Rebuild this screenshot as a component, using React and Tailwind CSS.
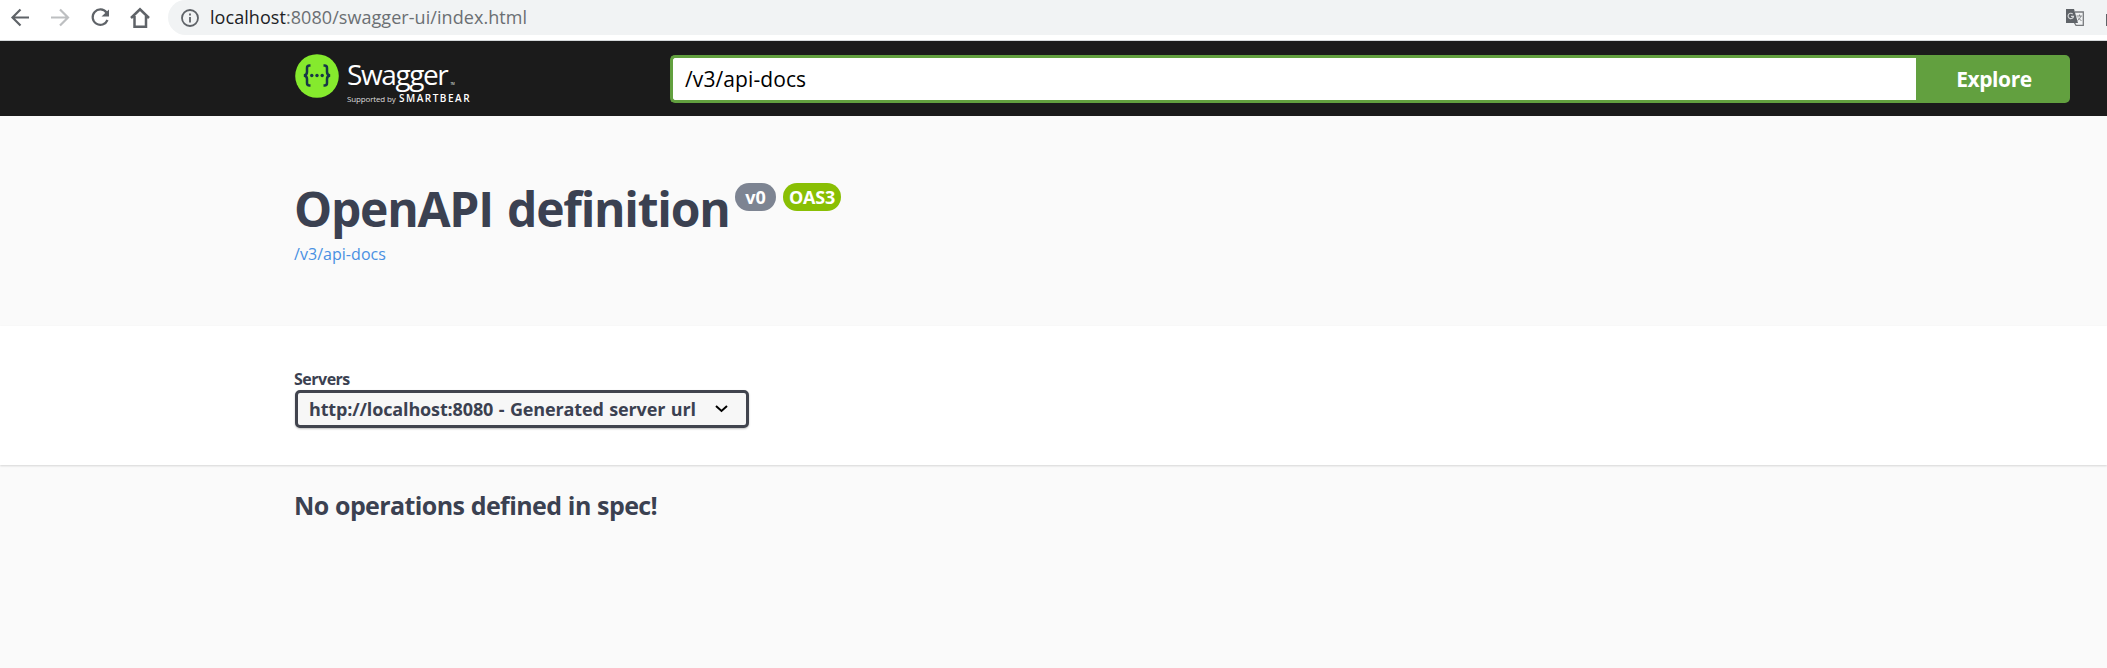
function BrowserBar() {
  return (
    <div className="flex h-[41px] items-start border-b border-[#d5d8da] bg-white">
      <svg className="h-[37px] w-[168px] shrink-0" viewBox="0 0 168 37" fill="none" strokeWidth="2.2">
        <path d="M29 17.500H13M20.500 9.500L12.500 17.500L20.500 25.500" stroke="#5f6368" />
        <path d="M51 17.500H67M60 9.500L68 17.500L60 25.500" stroke="#bdbfc1" />
        <path d="M106.500 12.500A7.700 7.700 0 1 0 107.500 20" stroke="#5f6368" />
        <path d="M109 9.500V16.500H101.500Z" fill="#5f6368" />
        <path d="M131 18L140 9.300L149 18M134.500 16V26.700H146V16" stroke="#5f6368" strokeWidth="2.500" />
      </svg>
      <div className="flex h-[35px] grow items-center rounded-l-[18px] bg-[#f1f3f4] pl-[13px]">
        <svg className="size-[18px]" viewBox="0 0 18 18" fill="none" stroke="#5f6368" strokeWidth="1.8">
          <circle cx="9" cy="9" r="8" />
          <path d="M9 8V13.500M9 4.500V6.400" />
        </svg>
        <span className="ml-[11px] grow pb-px text-[18px] leading-6 tracking-[0.06px] text-[#6b6f73]">
          <span className="text-[#202124]">localhost</span>:8080/swagger-ui/index.html
        </span>
        <svg className="mr-[22px] h-[17px] w-[18px]" viewBox="0 0 18 17" fill="none">
          <path d="M9 3H17.300V16.300H10L8 13" stroke="#77797c" strokeWidth="1.300" />
          <path d="M0 0H8L12 14H0Z" fill="#5f6368" />
          <path d="M5 7.300H7.500A2.700 2.700 0 1 1 6.700 5" stroke="#d5d7d9" strokeWidth="1.200" />
          <path d="M10.500 7H16M13.500 5.500V7M15 7Q14 10 11.500 11.500M12 8.500L15.500 12" stroke="#85878a" />
        </svg>
        <span className="mb-[9px] h-3 w-px self-end bg-[#5f6368]" />
      </div>
    </div>
  );
}

function Logo() {
  return (
    <div className="flex h-[75px] w-[375px] shrink-0 items-start pt-[13px]">
      <svg className="size-[44px]" viewBox="0 0 44 44" fill="none">
        <circle cx="22" cy="22" r="21.800" fill="#85ea2d" />
        <path d="M15.500 11.500H14.500Q12 11.500 12 14V18Q12 21 9 21.500Q12 22 12 25V29Q12 31.500 14.500 31.500H15.500M28.500 11.500H29.500Q32 11.500 32 14V18Q32 21 35 21.500Q32 22 32 25V29Q32 31.500 29.500 31.500H28.500" stroke="#173647" strokeWidth="2.500" />
        <g fill="#173647"><circle cx="16.800" cy="21.500" r="1.700" /><circle cx="22" cy="21.500" r="1.700" /><circle cx="27.200" cy="21.500" r="1.700" /></g>
      </svg>
      <div className="ml-[8px] text-white">
        <div className="flex h-[39px] items-end">
          <span className="text-[28px] leading-[38px] tracking-[-1.4px]">Swagger</span>
          <span className="mb-[7px] ml-[3px] text-[3px] leading-[4px]">TM</span>
        </div>
        <div className="-mt-px flex items-baseline whitespace-nowrap leading-[12px]">
          <span className="w-[52px] text-[8px] tracking-[-0.15px] text-[#dcdcdc]">Supported by</span>
          <span className="text-[10px] font-semibold tracking-[1.5px]">SMARTBEAR</span>
        </div>
      </div>
    </div>
  );
}

export default function App() {
  return (
    <div className="h-[668px] overflow-hidden bg-[#fafafa] font-['Open_Sans','Noto_Sans',sans-serif] text-[#3b4151]">
      <BrowserBar />
      <header className="flex h-[75px] bg-[#1b1b1b] pl-[295px]">
        <Logo />
        <form className="mt-[14px] flex h-[48px] w-[1400px]">
          <div className="flex grow items-center rounded-l-[5px] border-[3px] border-r-0 border-[#62a03f] bg-white pl-[12px] text-[21px] leading-7 tracking-[0.1px] text-black">/v3/api-docs</div>
          <button type="button" className="w-[154px] rounded-r-[5px] bg-[#62a03f] pl-0.5 text-[21px] font-bold leading-7 tracking-[-0.4px] text-white">Explore</button>
        </form>
      </header>
      <section className="h-[210px] pl-[294px] pt-[61px]">
        <div className="flex items-start">
          <h1 className="w-[441px] whitespace-nowrap text-[48px] font-bold leading-[64px] tracking-[-1.25px] [word-spacing:3px]">OpenAPI definition</h1>
          <span className="mt-[6px] flex h-[28px] w-[41px] items-center justify-center rounded-[14px] bg-[#7d8492] pt-px text-[18px] font-bold text-white">v0</span>
          <span className="ml-[7px] mt-[6px] flex h-[28px] w-[58px] items-center justify-center rounded-[14px] bg-[#89bf04] pt-px text-[18px] font-bold tracking-[-0.2px] text-white">OAS3</span>
        </div>
        <a className="mt-px block text-[16px] leading-6 tracking-[0.04px] text-[#4990e2]">/v3/api-docs</a>
      </section>
      <section className="h-[139px] bg-white pl-[295px] pt-[43px] shadow-[0_1px_2px_rgba(0,0,0,0.15)]">
        <div className="-ml-px text-[16px] font-bold leading-5 tracking-[-0.5px]">Servers</div>
        <div className="mt-px flex h-[38px] w-[454px] items-center rounded-[5px] border-[3px] border-[#41444e] bg-[#f7f7f7] pl-[11px] shadow-[0_1px_2px_rgba(0,0,0,0.25)]">
          <span className="w-[406px] whitespace-nowrap pb-px text-[18px] font-bold leading-6 tracking-[-0.14px] [word-spacing:1px]">http://localhost:8080 - Generated server url</span>
          <svg className="h-[8px] w-[13px]" viewBox="0 0 13 8" fill="none" stroke="#000" strokeWidth="2"><path d="M1 1L6.500 6L12 1" /></svg>
        </div>
      </section>
      <h3 className="pl-[294px] pt-[23px] text-[25px] font-bold leading-[34px] tracking-[-0.6px] [word-spacing:0.5px]">No operations defined in spec!</h3>
    </div>
  );
}
